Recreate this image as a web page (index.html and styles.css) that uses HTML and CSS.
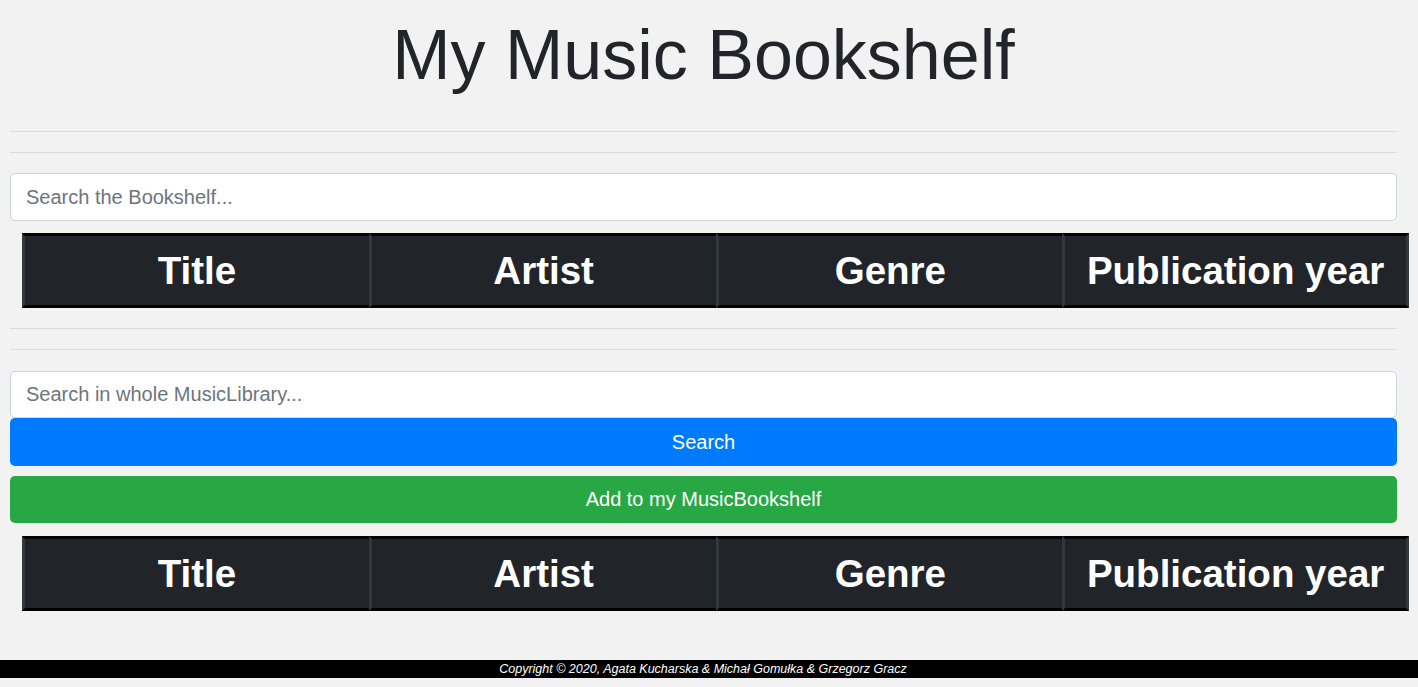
FILE: index.html
```html
<!DOCTYPE html>
<html lang="en">
<head>
<meta charset="utf-8">
<title>My Music Bookshelf</title>
<link rel="stylesheet" href="styles.css">
</head>
<body>
<div class="container">
  <h1 class="title">My Music Bookshelf</h1>
  <hr class="rule first">
  <hr class="rule">
  <input class="search" type="text" placeholder="Search the Bookshelf...">
  <table class="music-table">
    <thead>
      <tr><th>Title</th><th>Artist</th><th>Genre</th><th>Publication year</th></tr>
    </thead>
  </table>
  <hr class="rule">
  <hr class="rule">
  <input class="search library" type="text" placeholder="Search in whole MusicLibrary...">
  <button class="btn btn-blue" type="button">Search</button>
  <button class="btn btn-green" type="button">Add to my MusicBookshelf</button>
  <table class="music-table second">
    <thead>
      <tr><th>Title</th><th>Artist</th><th>Genre</th><th>Publication year</th></tr>
    </thead>
  </table>
</div>
<footer class="footer">Copyright © 2020, Agata Kucharska &amp; Michał Gomułka &amp; Grzegorz Gracz</footer>
</body>
</html>
```
FILE: styles.css
```css
html, body {
  margin: 0;
  padding: 0;
  background: #f2f2f2;
  font-family: "Liberation Sans", Arial, sans-serif;
  color: #212529;
}
.container {
  margin-left: 10px;
  width: 1387px;
  display: flex;
  flex-direction: column;
}
.title {
  margin: 0;
  padding-top: 13px;
  font-size: 70px;
  font-weight: 400;
  line-height: 85px;
  text-align: center;
  color: #212529;
}
.rule {
  width: 100%;
  margin: 20px 0 0;
  border: 0;
  border-top: 1px solid #dcdcdc;
  height: 0;
}
.rule.first {
  margin-top: 33px;
}
.search {
  box-sizing: border-box;
  margin-top: 20px;
  width: 100%;
  height: 48px;
  padding: 8px 16px 8px 15px;
  font-family: "Liberation Sans", Arial, sans-serif;
  font-size: 20px;
  color: #495057;
  background: #fff;
  border: 1px solid #ced4da;
  border-radius: 5px;
  outline: none;
}
.search.library {
  margin-top: 21px;
  height: 47px;
}
.search::placeholder {
  color: #6c757d;
}
.music-table {
  margin-top: 12px;
  margin-left: 12px;
  width: 1387px;
  border-collapse: separate;
  border-spacing: 0;
  table-layout: fixed;
}
.music-table.second {
  margin-top: 13px;
}
.music-table th {
  height: 69px;
  padding: 0;
  background: #212529;
  color: #fff;
  font-size: 38.5px;
  font-weight: 700;
  text-align: center;
  vertical-align: middle;
  border-top: 3px solid #000;
  border-bottom: 3px solid #000;
  border-left: 3px solid #32383e;
}
.music-table th:last-child {
  border-right: 3px solid #32383e;
}
.btn {
  box-sizing: border-box;
  width: 100%;
  height: 48px;
  border: 0;
  border-radius: 5px;
  color: #fff;
  font-family: "Liberation Sans", Arial, sans-serif;
  font-size: 20px;
  text-align: center;
  padding: 0;
}
.btn-blue {
  margin-top: 0;
  background: #007bff;
}
.btn-green {
  margin-top: 10px;
  height: 47px;
  background: #28a745;
}
.footer {
  margin-top: 49px;
  height: 18px;
  background: #000;
  color: #fff;
  font-size: 12.5px;
  font-style: italic;
  line-height: 18px;
  text-align: center;
  padding-right: 12px;
}
```
